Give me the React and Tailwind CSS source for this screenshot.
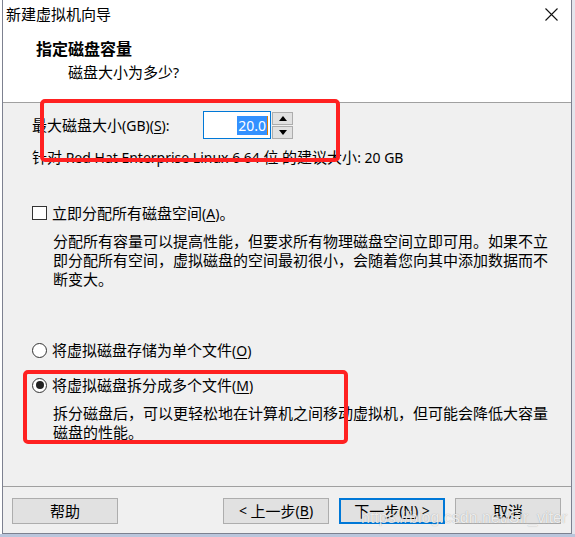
import React from "react";

const FONT = { fontFamily: '"Noto Sans", "Noto Sans CJK SC", sans-serif' };

// Latin runs are set a bit smaller, as in the Windows UI font
const L = ({ children }) => <span className="text-[14px] leading-none">{children}</span>;
const U = ({ children }) => <span className="underline underline-offset-2">{children}</span>;

const WinButton = ({ children, focused = false }) => (
    <div
        className={`w-[106px] h-[26px] flex items-center justify-center bg-[#e1e1e1] text-[15px] leading-[20px] text-black whitespace-nowrap ${
            focused ? "border-2 border-[#0078d7]" : "border border-[#adadad]"
        }`}
    >
        {children}
    </div>
);

const Radio = ({ checked }) => (
    <div className="w-[15px] h-[15px] rounded-full border border-[#333] bg-white flex items-center justify-center shrink-0">
        {checked && <div className="w-[8px] h-[8px] rounded-full bg-[#222]" />}
    </div>
);

const App = () => {
    return (
        <div className="relative w-[575px] h-[537px] bg-white overflow-hidden text-black" style={FONT}>
            <div className="flex h-[534px]">
                <div className="w-[2px] bg-white shrink-0" />
                {/* dialog window */}
                <div className="w-[570px] h-[534px] shrink-0 flex flex-col border-l border-r border-b border-[#7d8190]">
                    {/* title bar */}
                    <div className="h-[28px] shrink-0 bg-white flex items-center justify-between pl-[3px] pr-[13px]">
                        <span className="text-[15px] leading-[20px]">新建虚拟机向导</span>
                        <svg width="13" height="13" viewBox="0 0 13 13">
                            <path d="M0.5 0.5 L12.5 12.5 M12.5 0.5 L0.5 12.5" stroke="#111" strokeWidth="1.1" fill="none" />
                        </svg>
                    </div>
                    {/* header */}
                    <div className="h-[74px] shrink-0 bg-white pt-[11px]">
                        <div className="pl-[33px] text-[16px] leading-[20px] font-bold">指定磁盘容量</div>
                        <div className="pl-[65px] mt-[3px] text-[15px] leading-[20px]">
                            磁盘大小为多少<L>?</L>
                        </div>
                    </div>
                    <div className="h-px shrink-0 bg-[#a0a0a0]" />
                    {/* body */}
                    <div className="flex-1 min-h-0 bg-[#f0f0f0] flex flex-col text-[15px] whitespace-nowrap">
                        <div className="mt-[8px] pl-[29px] flex items-center h-[28px] shrink-0">
                            <span className="w-[171px] leading-[20px]">
                                最大磁盘大小<L>(GB)(<U>S</U>):</L>
                            </span>
                            <div className="w-[68px] h-[28px] bg-white border border-[#0078d7] flex items-center justify-end pr-[2px]">
                                <span className="bg-[#3391ff] text-white text-[14px] leading-[19px] px-px">20.0</span>
                                <span className="w-px h-[19px] bg-[#e07b00]" />
                            </div>
                            <div className="ml-px flex flex-col gap-px">
                                <div className="w-[21px] h-[13px] bg-[#e1e1e1] border border-[#adadad] flex items-center justify-center">
                                    <svg width="8" height="5" viewBox="0 0 8 5">
                                        <path d="M4 0 L8 5 L0 5 Z" fill="#000" />
                                    </svg>
                                </div>
                                <div className="w-[21px] h-[13px] bg-[#e1e1e1] border border-[#adadad] flex items-center justify-center">
                                    <svg width="8" height="5" viewBox="0 0 8 5">
                                        <path d="M0 0 L8 0 L4 5 Z" fill="#000" />
                                    </svg>
                                </div>
                            </div>
                        </div>
                        <div className="mt-[8px] pl-[29px] leading-[20px]">
                            针对<L> Red Hat Enterprise Linux 6 64 </L>位<L> </L>的建议大小<L>: 20 GB</L>
                        </div>

                        <div className="mt-[36px] pl-[29px] flex items-center gap-[5px] leading-[20px]">
                            <div className="w-[15px] h-[14px] border border-[#333] bg-white shrink-0" />
                            <span>
                                立即分配所有磁盘空间<L>(<U>A</U>)</L>。
                            </span>
                        </div>
                        <div className="mt-[9px] pl-[50px] leading-[19px]">
                            <div>分配所有容量可以提高性能，但要求所有物理磁盘空间立即可用。如果不立</div>
                            <div>即分配所有空间，虚拟磁盘的空间最初很小，会随着您向其中添加数据而不</div>
                            <div>断变大。</div>
                        </div>

                        <div className="mt-[51px] pl-[29px] flex items-center gap-[5px] leading-[20px]">
                            <Radio checked={false} />
                            <span>
                                将虚拟磁盘存储为单个文件<L>(<U>O</U>)</L>
                            </span>
                        </div>
                        <div className="mt-[15px] pl-[29px] flex items-center gap-[5px] leading-[20px]">
                            <Radio checked />
                            <span>
                                将虚拟磁盘拆分成多个文件<L>(<U>M</U>)</L>
                            </span>
                        </div>
                        <div className="mt-[9px] pl-[50px] leading-[19px]">
                            <div>拆分磁盘后，可以更轻松地在计算机之间移动虚拟机，但可能会降低大容量</div>
                            <div>磁盘的性能。</div>
                        </div>

                        <div className="flex-1" />
                        <div className="h-px shrink-0 bg-[#a0a0a0]" />
                        <div className="mt-[11px] mb-[9px] flex items-center pl-[9px] pr-[10px] shrink-0">
                            <WinButton>帮助</WinButton>
                            <div className="flex-1" />
                            <div className="flex gap-[10px]">
                                <WinButton>
                                    <L>&lt;&nbsp;</L>上一步<L>(<U>B</U>)</L>
                                </WinButton>
                                <WinButton focused>
                                    下一步<L>(<U>N</U>)&nbsp;&gt;</L>
                                </WinButton>
                                <WinButton>取消</WinButton>
                            </div>
                        </div>
                    </div>
                </div>
                <div className="flex-1 bg-[#e4e5ec]" />
            </div>
            <div className="h-[3px] bg-[#bac6dc]" />

            {/* annotation boxes drawn over the screenshot */}
            <div className="absolute left-[40px] top-[99px] w-[300px] h-[63px] border-[4px] border-[#ff2121] rounded-[5px]" />
            <div className="absolute left-[23px] top-[370px] w-[325px] h-[74px] border-[4px] border-[#ff2121] rounded-[5px]" />

            {/* watermark */}
            <div
                className="absolute left-[361px] top-[508px] text-[16px] leading-[20px] text-white/80 [text-shadow:0_0_1px_rgba(0,0,0,0.35)]"
                style={{ fontFamily: '"Liberation Sans", Arial, sans-serif' }}
            >
                https://blog.csdn.net/Sir_viter
            </div>
        </div>
    );
};

export default App;
